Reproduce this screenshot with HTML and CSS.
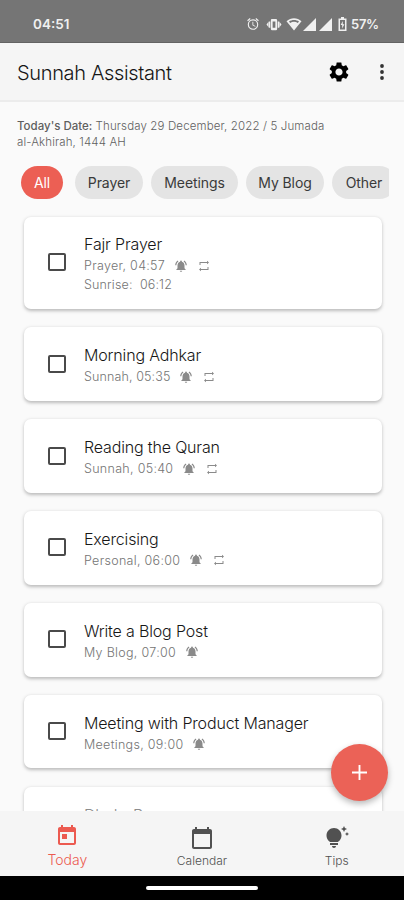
FILE: index.html
```html
<!DOCTYPE html>
<html lang="en">
<head>
<meta charset="utf-8">
<title>Sunnah Assistant</title>
<link rel="stylesheet" href="styles.css">
</head>
<body>
<svg class="defs" aria-hidden="true">
  <symbol id="bell" viewBox="0 0 24 24"><path d="M7.58 4.08L6.15 2.65C3.75 4.48 2.17 7.3 2.03 10.5h2c.15-2.65 1.51-4.97 3.55-6.42zm12.39 6.42h2c-.15-3.2-1.73-6.02-4.12-7.85l-1.42 1.43c2.02 1.45 3.39 3.77 3.54 6.42zM18 11c0-3.07-1.64-5.64-4.5-6.32V4c0-.83-.67-1.5-1.5-1.5s-1.5.67-1.5 1.5v.68C7.63 5.36 6 7.92 6 11v5l-2 2v1h16v-1l-2-2v-5zm-6 11c1.1 0 2-.9 2-2h-4c0 1.1.9 2 2 2z"/></symbol>
  <symbol id="repeat" viewBox="0 0 24 24"><path d="M3 4h15V1.500l4 3.500-4 3.500V6H5v4H3zM21 20H6v2.500L2 19l4-3.500V18h13v-4h2z"/></symbol>
</svg>
<header class="status">
  <span class="clock">04:51</span>
  <div class="status-icons">
    <svg class="alarm" viewBox="0 0 24 24"><path d="M22 5.700l-4.600-3.900-1.300 1.500 4.600 3.900L22 5.700zM7.900 3.400L6.600 1.900 2 5.700l1.300 1.500 4.600-3.800zM12.500 8H11v6l4.700 2.900.8-1.200-4-2.400V8zM12 4a9 9 0 1 0 0 18 9 9 0 0 0 0-18zm0 16a7 7 0 1 1 0-14 7 7 0 0 1 0 14z"/></svg>
    <svg class="vibrate" viewBox="0 0 24 24"><path fill-rule="evenodd" d="M0 12l3-4v8zM24 12l-3-4v8zM3.500 7H6v10H3.500zM18 7h2.500v10H18zM9 3h6a2 2 0 0 1 2 2v14a2 2 0 0 1-2 2H9a2 2 0 0 1-2-2V5c0-1.100.9-2 2-2zm.8 4v10h4.400V7z"/></svg>
    <svg class="wifi" viewBox="0 0 16 14"><path fill-rule="evenodd" d="M8 13.500L.5 4.200C4.800.2 11.200.2 15.500 4.200zM3 4.500l1.200 1.400c2.300-1.500 5.300-1.500 7.600 0L13 4.500C10 2.500 6 2.500 3 4.500z"/></svg>
    <svg class="signal" viewBox="0 0 13 13"><path d="M0 13L13 0v13z"/></svg>
    <svg class="signal" viewBox="0 0 13 13"><path d="M0 13L13 0v13z"/></svg>
    <svg class="battery" viewBox="0 0 9 14"><path fill-rule="evenodd" d="M3 0h3v1.500h2.500V14H.5V1.500H3zM2 3v9.500h5V3zm2.800 1L2.700 8h1.500v3.600L6.400 7.300H4.800z"/></svg>
    <span class="percent">57%</span>
  </div>
</header>
<div class="appbar">
  <h1>Sunnah Assistant</h1>
  <svg class="gear" viewBox="0 0 24 24"><path d="M19.140 12.940c.04-.3.06-.61.06-.94 0-.32-.02-.64-.07-.94l2.030-1.580c.18-.14.23-.41.12-.61l-1.920-3.320c-.12-.22-.37-.29-.59-.22l-2.390.96c-.5-.38-1.030-.7-1.620-.94l-.36-2.540c-.04-.24-.24-.41-.48-.41h-3.840c-.24 0-.43.17-.47.41l-.36 2.540c-.59.24-1.130.57-1.620.94l-2.390-.96c-.22-.08-.47 0-.59.22L2.740 8.870c-.12.21-.08.47.12.61l2.030 1.580c-.05.3-.09.63-.09.94s.02.64.07.94l-2.030 1.580c-.18.14-.23.41-.12.61l1.920 3.320c.12.22.37.29.59.22l2.390-.96c.5.38 1.030.7 1.620.94l.36 2.540c.05.24.24.41.48.41h3.840c.24 0 .44-.17.47-.41l.36-2.540c.59-.24 1.130-.56 1.620-.94l2.390.96c.22.08.47 0 .59-.22l1.920-3.320c.12-.22.07-.47-.12-.61l-2.010-1.580zM12 15.600c-1.980 0-3.600-1.620-3.600-3.600s1.620-3.600 3.600-3.600 3.600 1.620 3.600 3.600-1.620 3.600-3.600 3.600z"/></svg>
  <svg class="more" viewBox="0 0 4 16"><circle cx="2" cy="2" r="1.900"/><circle cx="2" cy="8" r="1.900"/><circle cx="2" cy="14" r="1.900"/></svg>
</div>
<main>
  <p class="date"><b>Today's Date:</b> <span>Thursday 29 December, 2022 / 5 Jumada<br>al-Akhirah, 1444 AH</span></p>
  <nav class="chips">
    <span class="chip chip-all">All</span>
    <span class="chip chip-prayer">Prayer</span>
    <span class="chip chip-meetings">Meetings</span>
    <span class="chip chip-blog">My Blog</span>
    <span class="chip chip-other">Other</span>
  </nav>
  <div class="list">
    <article class="card tall"><i class="box"></i><div class="info"><h2>Fajr Prayer</h2><p><span>Prayer, 04:57</span><svg class="bell"><use href="#bell"/></svg><svg class="repeat"><use href="#repeat"/></svg></p><p class="sunrise">Sunrise:&nbsp; 06:12</p></div></article>
    <article class="card"><i class="box"></i><div class="info"><h2>Morning Adhkar</h2><p class="snug"><span>Sunnah, 05:35</span><svg class="bell"><use href="#bell"/></svg><svg class="repeat"><use href="#repeat"/></svg></p></div></article>
    <article class="card"><i class="box"></i><div class="info"><h2>Reading the Quran</h2><p><span>Sunnah, 05:40</span><svg class="bell"><use href="#bell"/></svg><svg class="repeat"><use href="#repeat"/></svg></p></div></article>
    <article class="card"><i class="box"></i><div class="info"><h2>Exercising</h2><p><span>Personal, 06:00</span><svg class="bell"><use href="#bell"/></svg><svg class="repeat"><use href="#repeat"/></svg></p></div></article>
    <article class="card"><i class="box"></i><div class="info"><h2>Write a Blog Post</h2><p><span>My Blog, 07:00</span><svg class="bell"><use href="#bell"/></svg></p></div></article>
    <article class="card"><i class="box"></i><div class="info"><h2>Meeting with Product Manager</h2><p><span>Meetings, 09:00</span><svg class="bell"><use href="#bell"/></svg></p></div></article>
    <article class="card last"><div class="info"><h2>Dhuhr Prayer</h2></div></article>
  </div>
</main>
<button class="fab" aria-label="Add"><svg viewBox="0 0 16 16"><path d="M7 0h2v7h7v2H9v7H7V9H0V7h7z"/></svg></button>
<footer class="tabs">
  <div class="tab active"><svg viewBox="0 0 24 24"><path d="M19 3h-1V1h-2v2H8V1H6v2H5c-1.110 0-1.990.9-1.990 2L3 19c0 1.100.89 2 2 2h14c1.100 0 2-.9 2-2V5c0-1.100-.9-2-2-2zm0 16H5V8h14v11zM7 10h5v5H7z"/></svg><span>Today</span></div>
  <div class="tab"><svg viewBox="0 0 24 24"><path d="M20 3h-1V1h-2v2H7V1H5v2H4c-1.100 0-2 .9-2 2v16c0 1.100.9 2 2 2h16c1.100 0 2-.9 2-2V5c0-1.100-.9-2-2-2zm0 18H4V8h16v13z"/></svg><span>Calendar</span></div>
  <div class="tab"><svg viewBox="0 0 24 24"><path d="M7 20h4c0 1.100-.9 2-2 2s-2-.9-2-2zm-2-1h8v-2H5v2zm11.500-9.500c0 3.820-2.660 5.860-3.770 6.500H5.270C4.160 15.360 1.500 13.320 1.500 9.500 1.500 5.360 4.860 2 9 2s7.500 3.360 7.500 7.500zm4.870-2.130L20 8l1.370.63L22 10l.63-1.370L24 8l-1.370-.63L22 6l-.63 1.370zM19 6l.94-2.060L22 3l-2.060-.94L19 0l-.94 2.060L16 3l2.060.94L19 6z"/></svg><span>Tips</span></div>
</footer>
<div class="gesture"><i></i></div>
</body>
</html>
```

FILE: styles.css
```css
* { box-sizing: border-box; }
body {
  margin: 0;
  width: 404px;
  height: 900px;
  overflow: hidden;
  display: flex;
  flex-direction: column;
  position: relative;
  background: #fafafa;
  font-family: Inter, "Open Sans", sans-serif;
}
svg { display: block; fill: currentColor; flex: none; }
.defs { position: absolute; width: 0; height: 0; }
h1, h2, p { margin: 0; font-weight: 300; white-space: nowrap; }

.status {
  height: 43px;
  flex: none;
  background: #757575;
  border-bottom: 1px solid #636363;
  color: #f0f0f0;
  display: flex;
  align-items: center;
  justify-content: space-between;
  padding: 6px 26px 0 33px;
  font-weight: 600;
  font-size: 13.500px;
}
.status-icons { display: flex; align-items: center; }
.alarm { width: 14px; height: 14px; margin-right: 6px; }
.vibrate { width: 16px; height: 15px; margin-right: 4px; }
.wifi { width: 16px; height: 14px; margin-right: 1px; }
.signal { width: 13px; height: 13px; margin-right: 2.500px; }
.battery { width: 9px; height: 14px; margin: 0 4px 0 4px; }
.percent { font-size: 13px; letter-spacing: -0.3px; width: 27px; }

.appbar {
  height: 59px;
  flex: none;
  background: #f5f5f5;
  border-bottom: 2px solid #ececec;
  display: flex;
  align-items: center;
  padding: 0 20px 0 17px;
}
h1 { font-size: 20px; letter-spacing: -0.35px; color: #161616; flex: 1; padding-top: 2px; }
.gear { width: 24px; height: 24px; color: #000; margin-right: 29px; }
.more { width: 4px; height: 16px; color: #333; }

main { flex: 1; min-height: 0; overflow: hidden; }
.date { padding: 17px 17px 0; font-size: 11.500px; line-height: 15.500px; color: #5f5f5f; }
.date span { letter-spacing: 0.13px; }
.date b { font-weight: 500; }
.chips { display: flex; margin: 16px 15px 0 21px; height: 33px; overflow: hidden; }
.chip {
  flex: none;
  height: 33px;
  border-radius: 17px;
  background: #e4e4e4;
  color: #3a3a3a;
  font-size: 14px;
  letter-spacing: -0.1px;
  display: flex;
  align-items: center;
  justify-content: center;
  margin-right: 8px;
}
.chip-all { width: 42px; background: #ec5f54; color: #fff; margin-right: 12px; }
.chip-prayer { width: 68px; }
.chip-meetings { width: 87px; }
.chip-blog { width: 78px; }
.chip-other { width: 64px; }

.list { display: flex; flex-direction: column; gap: 18.400px; padding: 17.500px 22px 0 23.500px; }
.card {
  flex: none;
  height: 73.500px;
  border-radius: 7px;
  background: #fff;
  box-shadow: 0 1.500px 3.500px rgba(0, 0, 0, 0.25);
  display: flex;
  align-items: center;
  padding-left: 24px;
}
.tall { height: 92.500px; }
.box { width: 18px; height: 18px; border: 2px solid #4a4a4a; border-radius: 2px; margin: -1px 18.500px 0 0; flex: none; }
.info { padding-top: 2px; }
.info h2 { font-size: 16px; line-height: 23px; letter-spacing: -0.16px; color: #171717; }
.info p { font-size: 12.500px; line-height: 19px; letter-spacing: 0.3px; color: #747474; display: flex; align-items: center; }
.info .snug { letter-spacing: 0.12px; }
.info .sunrise { letter-spacing: 0.15px; }
.bell { width: 14px; height: 14px; color: #8a8a8a; margin-left: 9px; }
.repeat { width: 12px; height: 12px; color: #8a8a8a; margin-left: 10px; }
.last { align-items: flex-start; padding: 15px 0 0 60.500px; }
.last .info h2 { color: #8c8c8c; }

.fab {
  position: absolute;
  left: 331px;
  top: 744px;
  width: 57px;
  height: 57px;
  border: 0;
  border-radius: 50%;
  background: #eb6257;
  color: #fff;
  box-shadow: 0 3px 6px rgba(0, 0, 0, 0.28);
  display: flex;
  align-items: center;
  justify-content: center;
  padding: 0;
}
.fab svg { width: 15px; height: 15px; }

.tabs { height: 65px; flex: none; background: #f5f5f5; display: flex; }
.tab {
  flex: 1;
  display: flex;
  flex-direction: column;
  align-items: center;
  color: #515151;
  font-size: 12px;
  font-weight: 300;
}
.tab svg { height: 24px; width: 24px; margin-top: 15px; }
.tab span { line-height: 16px; margin-top: 3px; }
.active { color: #ec5a50; font-size: 14px; }
.active svg { margin-top: 13px; }
.active span { margin-top: 4px; }
.gesture { height: 24px; flex: none; background: #000; display: flex; align-items: center; justify-content: center; }
.gesture i { width: 112px; height: 4px; border-radius: 2px; background: #fff; }
```
